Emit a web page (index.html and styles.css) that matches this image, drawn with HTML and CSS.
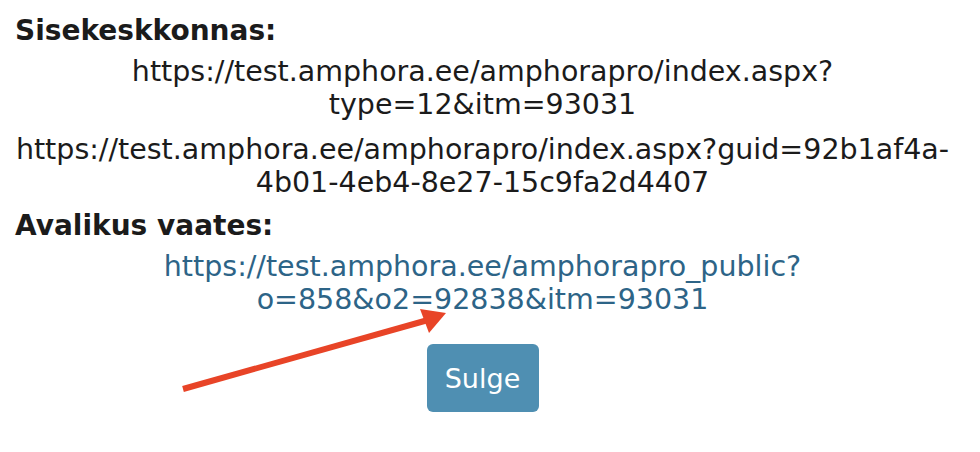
FILE: index.html
```html
<!DOCTYPE html>
<html lang="et">
<head>
    <meta charset="UTF-8">
    <meta name="viewport" content="width=device-width, initial-scale=1.0">
    <title>Lingid</title>
    <link rel="stylesheet" href="styles.css">
</head>
<body>
    <div class="dialog">
        <h3 class="label">Sisekeskkonnas:</h3>
        <p class="url">https://test.amphora.ee/amphorapro/index.aspx?<br>type=12&amp;itm=93031</p>
        <p class="url last">https://test.amphora.ee/amphorapro/index.aspx?guid=92b1af4a-<br>4b01-4eb4-8e27-15c9fa2d4407</p>

        <h3 class="label">Avalikus vaates:</h3>
        <p class="url"><a href="#" class="public-link">https://test.amphora.ee/amphorapro_public?<br>o=858&amp;o2=92838&amp;itm=93031</a></p>

        <div class="actions">
            <button class="close-button">Sulge</button>
        </div>
    </div>

    <!-- annotation arrow -->
    <svg class="arrow" width="980" height="452" viewBox="0 0 980 452">
        <line x1="183" y1="389" x2="428" y2="320" stroke="#e84427" stroke-width="6"/>
        <polygon points="446,313 420,309 429,333" fill="#e84427"/>
    </svg>
</body>
</html>
```

FILE: styles.css
```css
body {
    font-family: "DejaVu Sans", Verdana, sans-serif;
    font-size: 28.5px;
    line-height: 33px;
    color: #1b1b1b;
    margin: 0;
    background: #fff;
}
.dialog {
    padding: 14px 30px 0 15px;
}
.label {
    font-size: 28px;
    font-weight: bold;
    margin: 0;
}
.url {
    text-align: center;
    margin: 9px 0 12px 0;
}
.url.last { margin-bottom: 10px; }
.label + .url { margin-top: 8px; }
.public-link {
    color: #2d6487;
    text-decoration: none;
}
.actions {
    text-align: center;
    margin-top: 28px;
}
.close-button {
    font-family: inherit;
    font-size: 27px;
    color: #fff;
    background: #4f8fb2;
    border: none;
    border-radius: 6px;
    width: 112px;
    height: 68px;
    cursor: pointer;
}
.arrow {
    position: absolute;
    left: 0;
    top: 0;
    pointer-events: none;
}
```
